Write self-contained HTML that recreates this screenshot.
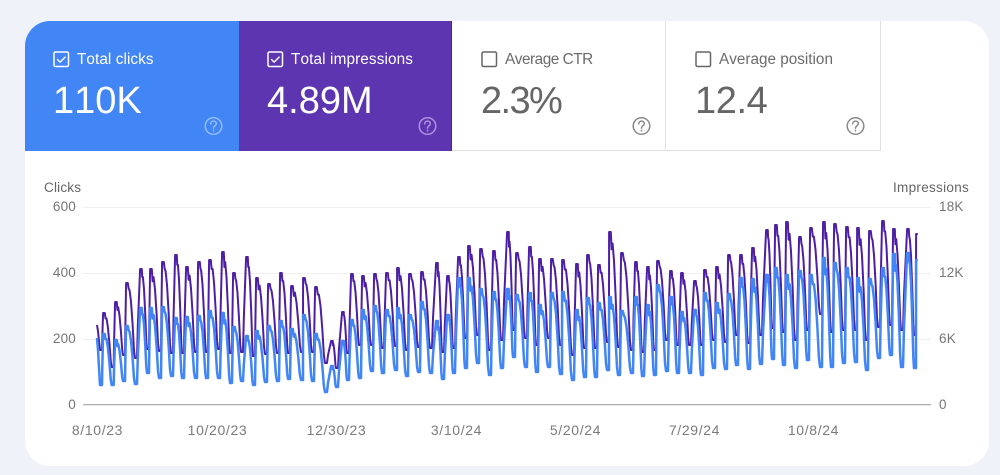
<!DOCTYPE html>
<html><head><meta charset="utf-8"><style>
html,body{margin:0;padding:0;width:1000px;height:475px;overflow:hidden;background:#eff2f8;font-family:"Liberation Sans",sans-serif;font-kerning:none}
#card{position:absolute;left:24.5px;top:21px;width:964px;height:445px;background:#fff;border-radius:25px}
.t{position:absolute;white-space:nowrap}
.tile{position:absolute;top:21px;height:129px}
.lab{font-size:15.3px;line-height:18px;top:51px}
.big{font-size:38px;line-height:44px;top:79px}
.ax{font-size:13.5px;line-height:16px;color:#757575;letter-spacing:.2px}
.d{font-size:14px;letter-spacing:.65px;color:#7b7b7b}
.r{text-align:right;width:40px}
.c{text-align:center;width:80px}
svg{position:absolute;left:0;top:0}
</style></head><body>
<div id="card"></div>
<div class="tile" style="left:24.5px;width:214.5px;background:#4285f4;border-top-left-radius:25px;height:129.5px"></div>
<div class="tile" style="left:239px;width:213px;background:#5e35b1;height:129.5px;box-sizing:border-box;border-right:1px solid #4a22a8"></div>
<div class="tile" style="left:452px;width:214px;background:#fff;box-sizing:border-box;border-right:1.5px solid #e4e4e4;border-bottom:1px solid #e0e0e0;height:130px"></div>
<div class="tile" style="left:666px;width:214.5px;background:#fff;box-sizing:border-box;border-right:1.5px solid #e0e0e0;border-bottom:1px solid #e0e0e0;height:130px"></div>

<div class="t lab" style="left:77px;color:#fff;letter-spacing:.08px">Total clicks</div>
<div class="t lab" style="left:291px;color:#fff;letter-spacing:.13px">Total impressions</div>
<div class="t lab" style="left:505px;color:#6b6b6b;letter-spacing:-.45px">Average CTR</div>
<div class="t lab" style="left:719px;color:#6b6b6b;letter-spacing:0">Average position</div>
<div class="t big" style="left:53px;color:#fff">110K</div>
<div class="t big" style="left:267px;color:#fff">4.89M</div>
<div class="t big" style="left:481px;color:#666;letter-spacing:-1.6px">2.3%</div>
<div class="t big" style="left:695px;color:#666;letter-spacing:-.4px">12.4</div>

<div class="t ax" style="left:44px;top:179.500px;color:#666">Clicks</div>
<div class="t ax" style="left:893px;top:179.500px;color:#666;letter-spacing:.3px">Impressions</div>
<div class="t ax r" style="left:36px;top:199px">600</div>
<div class="t ax r" style="left:36px;top:265px">400</div>
<div class="t ax r" style="left:36px;top:331px">200</div>
<div class="t ax r" style="left:36px;top:397px">0</div>
<div class="t ax" style="left:939px;top:199px">18K</div>
<div class="t ax" style="left:939px;top:265px">12K</div>
<div class="t ax" style="left:939px;top:331px">6K</div>
<div class="t ax" style="left:939px;top:397px">0</div>
<div class="t ax c d" style="left:57.500px;top:421.500px">8/10/23</div>
<div class="t ax c d" style="left:177.500px;top:421.500px">10/20/23</div>
<div class="t ax c d" style="left:296.500px;top:421.500px">12/30/23</div>
<div class="t ax c d" style="left:416.500px;top:421.500px">3/10/24</div>
<div class="t ax c d" style="left:535.500px;top:421.500px">5/20/24</div>
<div class="t ax c d" style="left:654.500px;top:421.500px">7/29/24</div>
<div class="t ax c d" style="left:773.500px;top:421.500px">10/8/24</div>

<svg width="1000" height="475" viewBox="0 0 1000 475" fill="none">
<g stroke-linejoin="round" stroke-linecap="round">
<rect x="54" y="52" width="14.500" height="14.500" rx="1.500" stroke="#fff" stroke-width="1.500"/>
<path d="M57.500 59.500l2.600 2.600 5-5" stroke="#fff" stroke-width="1.400"/>
<rect x="268" y="52" width="14.500" height="14.500" rx="1.500" stroke="#fff" stroke-width="1.500"/>
<path d="M271.500 59.500l2.600 2.600 5-5" stroke="#fff" stroke-width="1.400"/>
<rect x="482" y="52" width="14.500" height="14.500" rx="1.500" stroke="#666" stroke-width="1.500"/>
<rect x="696" y="52" width="14.500" height="14.500" rx="1.500" stroke="#666" stroke-width="1.500"/>
</g>
<g stroke-width="1.500" stroke-linecap="round">
<g stroke="#93bcfa"><circle cx="213.500" cy="126" r="8.300"/><path d="M210.700 123.900c0-1.700 1.200-2.800 2.800-2.800s2.800 1.100 2.800 2.600c0 2-2.800 2.100-2.800 4.400"/><path d="M213.500 130.300v.6"/></g>
<g stroke="#ae92dd"><circle cx="427.500" cy="126" r="8.300"/><path d="M424.700 123.900c0-1.700 1.200-2.800 2.800-2.800s2.800 1.100 2.800 2.600c0 2-2.800 2.100-2.800 4.400"/><path d="M427.500 130.300v.6"/></g>
<g stroke="#8a8a8a"><circle cx="641.500" cy="126" r="8.300"/><path d="M638.700 123.900c0-1.700 1.200-2.800 2.800-2.800s2.800 1.100 2.800 2.600c0 2-2.800 2.100-2.800 4.400"/><path d="M641.500 130.300v.6"/></g>
<g stroke="#8a8a8a"><circle cx="855.500" cy="126" r="8.300"/><path d="M852.700 123.900c0-1.700 1.200-2.800 2.800-2.800s2.800 1.100 2.800 2.600c0 2-2.800 2.100-2.800 4.400"/><path d="M855.500 130.300v.6"/></g>
</g>
<path d="M83 207.500H931M83 273.500H931M83 339.500H931" stroke="#efefef" stroke-width="1"/>
<path d="M83 404.700H931" stroke="#a3a3a3" stroke-width="1.200"/>
<path id="pl" stroke="#4d1fa5" stroke-width="2" stroke-linejoin="round"/>
<path id="bl" stroke="#4285f4" stroke-width="2.500" stroke-linejoin="round"/>
</svg>
<script>
var W=[[101,350,385,104,313,334],[112.7,367,385,116,302,340],[124,355,381,127,283,326],[136,358,384,141,269,308],[148,349,373,151,269,308],[160,351,378,163,262,307],[172,353,376,176,255,318],[183,353,378,187,267,317],[196,352,378,199,262,316],[207,352,378,210,260,311],[219,349,378,223,252,313],[231,353,383,234,273,327],[242,352,381,247,257,336],[254,356,385,257,278,331],[266,354,382,269,284,326],[278,353,381,281,273,321],[289,353,379,292,286,329],[302,352,380,304,278,315],[313,352,381,316,287,334],[326,363,392,332,341,366],[337,368,387,343,312,341],[348,353,380,352,274,320],[360,345,378,363,276,310],[372,345,371,375,274,306],[383,348,373,387,273,310],[396,346,370,398,268,308],[407,350,376,410,274,315],[419,347,372,422,272,302],[431,348,373,437,263,321],[443,352,379,448,276,315],[454,348,373,459,257,278],[466,338,368,469,246,278],[478,335,363,481,249,289],[490,350,375,494,251,292],[502,340,368,508,232,289],[514,330,357,517,253,295],[526,338,367,530,247,293],[537,345,372,540,259,305],[549,338,367,552,259,293],[561,345,374,563,260,292],[573,355,380,577,264,310],[585,348,377,588,255,298],[596,348,377,599,265,303],[608,342,370,610,232,297],[619,347,375,622,253,311],[632,350,373,636,262,297],[643,352,376,648,267,305],[655,350,375,658,261,285],[667,340,371,671,271,297],[678,345,373,682,273,312],[690,345,373,695,281,310],[702,345,375,705,270,293],[714,340,368,717,267,303],[726,342,369,729,255,294],[737,335,365,741,255,278],[749,343,369,753,248,279],[761,335,364,767,230,275],[773,328,359,776,225,268],[784,332,365,787,222,275],[796,340,368,800,237,271],[808,330,360,811,228,275],[821,314,367,824,222,258],[832,332,367,835,224,263],[844,330,363,847,227,268],[856,330,362,858,228,278],[867,340,370,870,231,279],[879,327,358,883,221,268],[891,325,355,894,229,254],[902,330,367,908,229,253],[915,335,368,917,234,260]];
function build(ti,pi,start){
  var d="M"+start[0]+" "+start[1];
  d+=" L"+(start[0]+1)+" "+(start[1]+(W[0][ti]-start[1])*.25);
  for(var i=0;i<W.length;i++){
    var w=W[i],tx=w[0],t=w[ti],px=w[3],p=w[pi];
    var up=px-.9-(tx+1);
    d+=" L"+(tx-1)+" "+t+" L"+(tx+1)+" "+t;
    d+=" L"+(tx+1+up*.25).toFixed(1)+" "+(t+(p-t)*.35).toFixed(1);
    d+=" L"+(px-.9)+" "+p+" L"+(px+.8)+" "+p;
    if(i<W.length-1){
      var n=W[i+1],x2=n[0]-1,t2=n[ti],dx=x2-px,dy=t2-p,bump=(i%3==0)?.03:(i%3==1?.08:0);
      d+=" L"+(px+dx*.2).toFixed(1)+" "+(p+dy*(.07+bump)).toFixed(1);
      d+=" L"+(px+dx*.32).toFixed(1)+" "+(p+dy*.1).toFixed(1);
      d+=" L"+(px+dx*.5).toFixed(1)+" "+(p+dy*.25).toFixed(1);
      d+=" L"+(px+dx*.7).toFixed(1)+" "+(p+dy*.55).toFixed(1);
      d+=" L"+(px+dx*.88).toFixed(1)+" "+(p+dy*.9).toFixed(1);
    }
  }
  return d;
}
document.getElementById("pl").setAttribute("d",build(1,4,[97,325]));
document.getElementById("bl").setAttribute("d",build(2,5,[97,338]));
</script>
</body></html>
